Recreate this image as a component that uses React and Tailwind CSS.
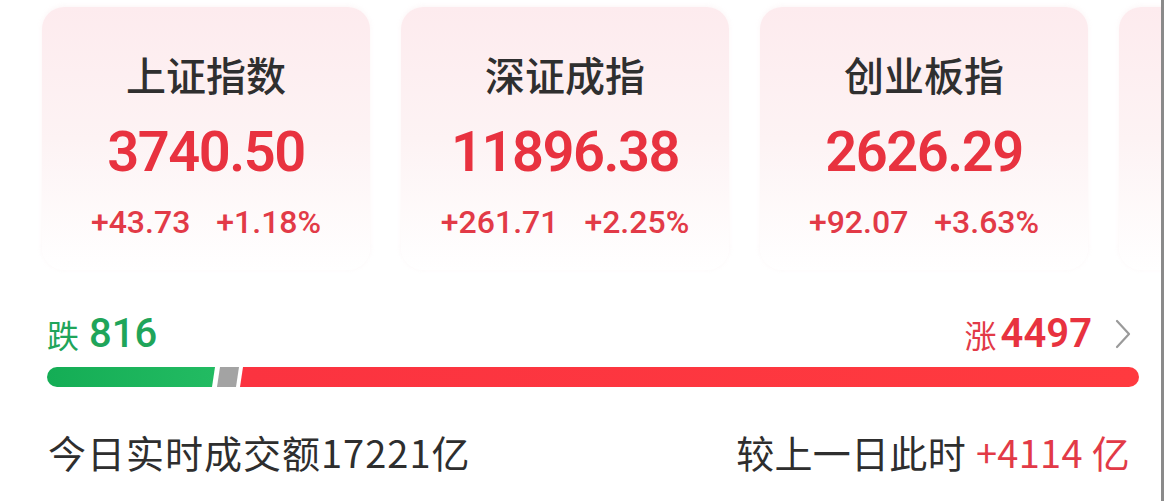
import React from "react";

const indices = [
  { name: "上证指数", value: "3740.50", change: "+43.73", pct: "+1.18%" },
  { name: "深证成指", value: "11896.38", change: "+261.71", pct: "+2.25%" },
  { name: "创业板指", value: "2626.29", change: "+92.07", pct: "+3.63%" },
];

const cjk = { fontFamily: '"Noto Sans CJK SC", "Noto Sans", sans-serif' };
const num = { fontFamily: 'Roboto, "Noto Sans CJK SC", sans-serif' };

function IndexCard({ item }) {
  return (
    <div className="flex h-[263px] w-[328px] shrink-0 flex-col items-center rounded-[22px] bg-gradient-to-b from-[#fdebee] via-[#fdf3f4] to-white pt-[47px] shadow-[0_-1px_5px_rgba(240,200,205,0.18)]">
      {item && (
        <>
          <div className="text-[40px] leading-[40px] font-medium text-[#2f2f2f]" style={cjk}>
            {item.name}
          </div>
          <div
            className="mt-[30px] text-[56px] leading-[56px] font-semibold tracking-[-1.5px] text-[#e8323f]"
            style={num}
          >
            {item.value}
          </div>
          <div className="mt-[26px] flex gap-[26px] text-[32px] leading-[32px] font-medium text-[#e23a47]" style={num}>
            <span>{item.change}</span>
            <span>{item.pct}</span>
          </div>
        </>
      )}
    </div>
  );
}

export default function App() {
  return (
    <div className="relative h-[501px] w-[1164px] overflow-hidden bg-white">
      {/* index cards, the fourth one is scrolled off to the right */}
      <div className="flex gap-[31px] pl-[42px] pt-[7px]">
        {indices.map((it) => (
          <IndexCard key={it.name} item={it} />
        ))}
        <IndexCard item={null} />
      </div>

      {/* up / down counts */}
      <div className="mt-[44px] flex items-center justify-between pl-[47px] pr-[32px]">
        <div className="flex items-center gap-[10px] text-[#1fa55a]">
          <span className="text-[32px] leading-[36px]" style={cjk}>跌</span>
          <span className="text-[40px] leading-[40px] font-medium" style={num}>816</span>
        </div>
        <div className="flex items-center">
          <span className="text-[32px] leading-[36px] text-[#e23a47]" style={cjk}>涨</span>
          <span className="ml-[4px] text-[40px] leading-[40px] font-semibold text-[#e8323f]" style={num}>4497</span>
          <svg className="ml-[22px]" width="18" height="30" viewBox="0 0 18 30" fill="none">
            <path d="M3 2 L15 15 L3 28" stroke="#9a9a9a" strokeWidth="2.2" strokeLinecap="round" strokeLinejoin="round" />
          </svg>
        </div>
      </div>

      {/* ratio bar */}
      <div className="mt-[13px] ml-[47px] flex h-[20px] w-[1092px]">
        <div className="h-full w-[168px] rounded-l-full bg-gradient-to-r from-[#14ad55] to-[#22bb62] [clip-path:polygon(0_0,100%_0,calc(100%_-_3px)_100%,0_100%)]" />
        <div className="ml-[2px] h-full w-[22px] bg-[#a3a3a3] [clip-path:polygon(3px_0,100%_0,calc(100%_-_3px)_100%,0_100%)]" />
        <div className="ml-[1px] h-full flex-1 rounded-r-full bg-gradient-to-r from-[#fb3340] to-[#ff3a3f] [clip-path:polygon(3px_0,100%_0,100%_100%,0_100%)]" />
      </div>

      {/* turnover */}
      <div
        className="mt-[45px] flex items-center justify-between pl-[48px] pr-[34px] text-[38px] leading-[40px] text-[#2e2e2e]"
        style={cjk}
      >
        <div className="tracking-[1px]">
          今日实时成交额<span>17221</span>亿
        </div>
        <div className="tracking-[0.3px]">
          较上一日此时<span className="ml-[10px] text-[#e23a47]">+4114 亿</span>
        </div>
      </div>

      {/* right edge strip */}
      <div className="absolute right-0 top-0 h-full w-[3px] bg-[#8a8a8a]" />
    </div>
  );
}
